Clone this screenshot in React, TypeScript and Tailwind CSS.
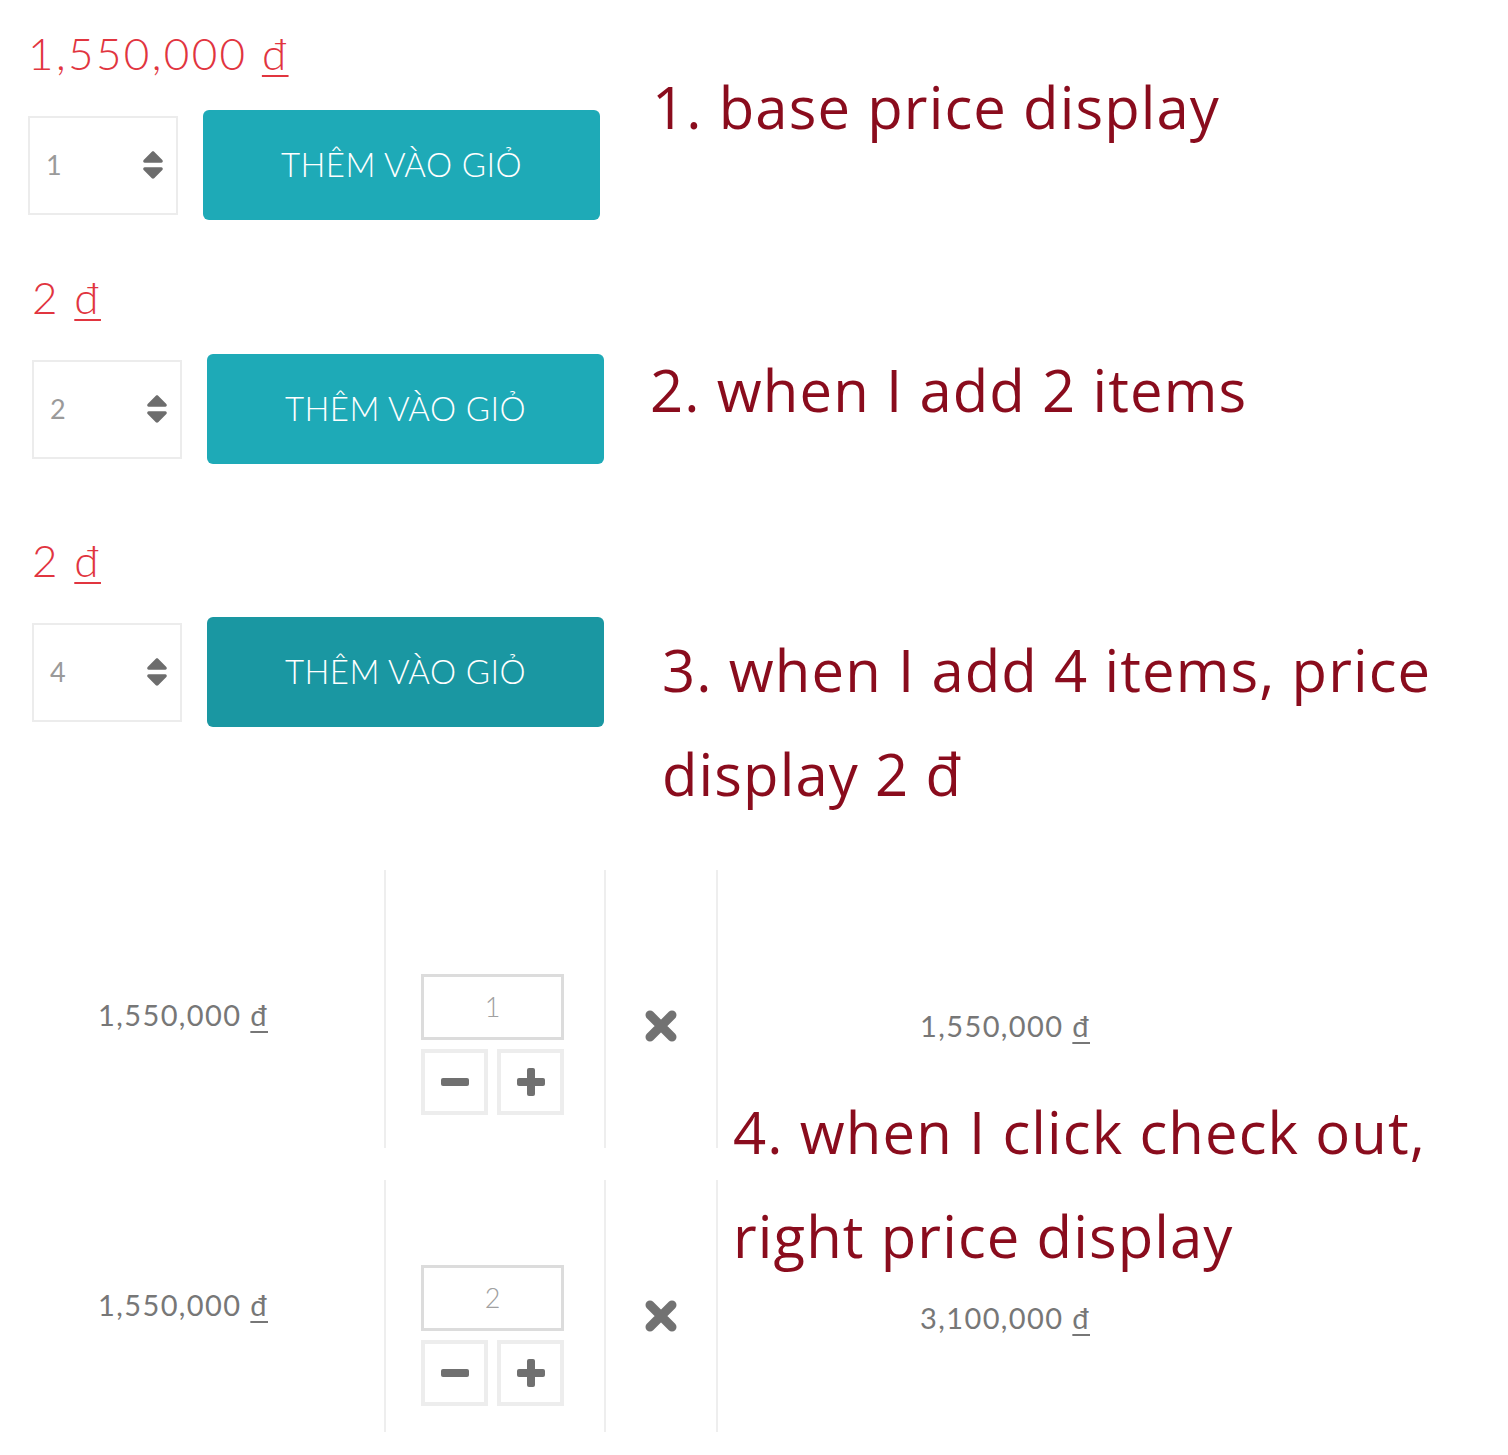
import React from "react";
import { FaSort } from "react-icons/fa";

type PriceProps = {
  amount: string;
  className?: string;
};

const Price = ({ amount, className }: PriceProps) => (
  <span className={className}>
    {amount}{" "}
    <span className="underline decoration-2 underline-offset-[5px]">đ</span>
  </span>
);

const Note = ({ children, className }: { children: React.ReactNode; className?: string }) => (
  <p
    className={`font-['Open_Sans',sans-serif] text-[58px] leading-[104px] tracking-[1.1px] text-[#8a0c1d] whitespace-nowrap ${className ?? ""}`}
  >
    {children}
  </p>
);

const QtySpinner = ({ value }: { value: string }) => (
  <div className="flex h-[99px] w-[150px] shrink-0 items-center justify-between border-2 border-[#ececec] bg-white pl-[16px] pr-[12px]">
    <span className="text-[27px] text-[#9a9a9a]">{value}</span>
    <FaSort className="h-[36px] w-[22px] text-[#6d6d6d]" />
  </div>
);

const AddButton = ({ dark }: { dark?: boolean }) => (
  <button
    className={`flex h-[110px] w-[397px] shrink-0 items-center justify-center rounded-[6px] text-[33px] font-light tracking-[0.4px] text-white ${
      dark ? "bg-[#1a97a2]" : "bg-[#1eaab7]"
    }`}
  >
    THÊM VÀO GIỎ
  </button>
);

type ProductBlockProps = {
  price: string;
  qty: string;
  padLeft: string;
  dark?: boolean;
};

const ProductBlock = ({ price, qty, padLeft, dark }: ProductBlockProps) => (
  <div className={`w-[620px] shrink-0 pt-[31px] ${padLeft}`}>
    <Price
      amount={price}
      className="block text-[44px] font-light leading-none tracking-[2.4px] text-[#e1353f]"
    />
    <div className="mt-[35px] flex items-center gap-[25px]">
      <QtySpinner value={qty} />
      <AddButton dark={dark} />
    </div>
  </div>
);

const MinusIcon = () => (
  <svg width="30" height="30" viewBox="0 0 30 30" className="text-[#707070]">
    <rect x="1" y="11" width="28" height="8" rx="2" fill="currentColor" />
  </svg>
);

const PlusIcon = () => (
  <svg width="30" height="30" viewBox="0 0 30 30" className="text-[#707070]">
    <rect x="1" y="11" width="28" height="8" rx="2" fill="currentColor" />
    <rect x="11" y="1" width="8" height="28" rx="2" fill="currentColor" />
  </svg>
);

const RemoveIcon = () => (
  <svg width="34" height="34" viewBox="0 0 34 34" className="text-[#727272]">
    <path
      d="M6 6 L28 28 M28 6 L6 28"
      stroke="currentColor"
      strokeWidth="9"
      strokeLinecap="round"
      fill="none"
    />
  </svg>
);

type CartRowProps = {
  qty: string;
  total: string;
  height: string;
  priceTop: string;
  qtyTop: string;
  xTop: string;
  totalTop: string;
};

const CartRow = ({ qty, total, height, priceTop, qtyTop, xTop, totalTop }: CartRowProps) => (
  <div className={`flex ${height}`}>
    <div className={`flex w-[386px] shrink-0 justify-center border-r-2 border-[#eeeeee] pr-[18px] ${priceTop}`}>
      <Price
        amount="1,550,000"
        className="text-[29px] leading-[36px] tracking-[1.4px] text-[#777]"
      />
    </div>
    <div className={`w-[220px] shrink-0 border-r-2 border-[#eeeeee] pl-[35px] ${qtyTop}`}>
      <div className="flex h-[66px] w-[143px] items-center justify-center border-[3px] border-[#dcdcdc] text-[27px] font-light text-[#a0a0a0]">
        {qty}
      </div>
      <div className="mt-[9px] flex gap-[9px]">
        <div className="flex h-[66px] w-[67px] items-center justify-center border-[4px] border-[#ededed]">
          <MinusIcon />
        </div>
        <div className="flex h-[66px] w-[67px] items-center justify-center border-[4px] border-[#ededed]">
          <PlusIcon />
        </div>
      </div>
    </div>
    <div className={`flex w-[112px] shrink-0 justify-center border-r-2 border-[#eeeeee] ${xTop}`}>
      <RemoveIcon />
    </div>
    <div className={`pl-[202px] ${totalTop}`}>
      <Price amount={total} className="text-[29px] leading-[36px] tracking-[1.4px] text-[#777]" />
    </div>
  </div>
);

export default function App() {
  return (
    <div className="w-[1508px] min-h-[1455px] bg-white font-['Lato',sans-serif]">
      <section className="flex h-[244px]">
        <ProductBlock price="1,550,000" qty="1" padLeft="pl-[28px]" />
        <Note className="pl-[32px] pt-[55px]">1. base price display</Note>
      </section>

      <section className="flex h-[263px]">
        <ProductBlock price="2" qty="2" padLeft="pl-[32px]" />
        <Note className="pl-[30px] pt-[94px]">2. when I add 2 items</Note>
      </section>

      <section className="flex h-[363px]">
        <ProductBlock price="2" qty="4" padLeft="pl-[32px]" dark />
        <Note className="pl-[42px] pt-[111px]">
          3. when I add 4 items, price
          <br />
          display 2 đ
        </Note>
      </section>

      <section className="relative">
        <CartRow
          qty="1"
          total="1,550,000"
          height="h-[278px]"
          priceTop="pt-[127px]"
          qtyTop="pt-[104px]"
          xTop="pt-[139px]"
          totalTop="pt-[138px]"
        />
        <div className="mt-[32px]">
          <CartRow
            qty="2"
            total="3,100,000"
            height="h-[252px]"
            priceTop="pt-[107px]"
            qtyTop="pt-[85px]"
            xTop="pt-[119px]"
            totalTop="pt-[120px]"
          />
        </div>
        <div className="absolute left-[733px] top-[210px] bg-white">
          <Note>
            4. when I click check out,
            <br />
            right price display
          </Note>
        </div>
      </section>
    </div>
  );
}
